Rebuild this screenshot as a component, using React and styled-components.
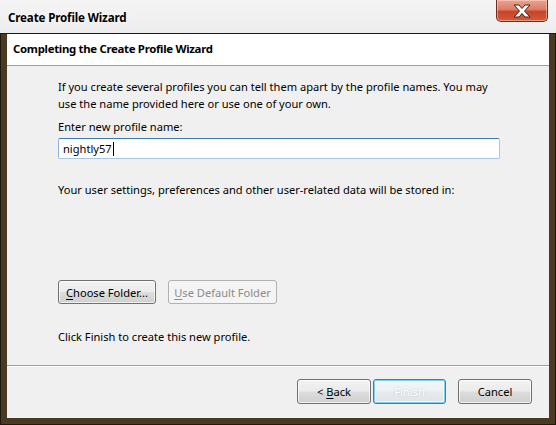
import styled, { createGlobalStyle } from "styled-components";

// Create Profile Wizard dialog (Windows 7 look)
const GlobalStyle = createGlobalStyle`
  html, body {
    margin: 0;
    padding: 0;
    background: #f0f0f0;
  }
  body {
    font-family: "Segoe UI", "Noto Sans", "Open Sans", sans-serif;
    font-size: 11.1px;
    color: #000;
  }
`;

const Window = styled.div`
  width: 556px;
  height: 425px;
  display: flex;
  flex-direction: column;
  background: #f0f0f0;
  overflow: hidden;
`;

const TitleBar = styled.div`
  height: 33px;
  flex-shrink: 0;
  display: flex;
  justify-content: space-between;
  align-items: flex-start;
  padding: 0 8px 0 8px;
  background: linear-gradient(#f4f4f4, #ededed);
`;

const TitleText = styled.div`
  font-weight: bold;
  font-size: 11.6px;
  letter-spacing: -0.15px;
  line-height: 35px;
  text-shadow: 0 0 6px #fff;
`;

const CloseButton = styled.div`
  width: 52px;
  height: 22px;
  box-sizing: border-box;
  display: flex;
  align-items: center;
  justify-content: center;
  border: 1px solid #6e2b20;
  border-top: none;
  border-radius: 0 0 5px 5px;
  background: linear-gradient(#e9a593 0%, #dd7b62 45%, #c8432a 55%, #d35a3a 100%);
  box-shadow: inset 0 0 0 1px rgba(255, 220, 210, 0.5);
`;

const Frame = styled.div`
  flex: 1;
  display: flex;
  flex-direction: column;
  border: 7px solid #4a3a22;
  border-top: none;
  box-shadow: inset 1px 0 0 #d6d0c4, inset -1px 0 0 #d6d0c4, inset 0 -1px 0 #d6d0c4;
  outline: 1px solid #1d1810;
  outline-offset: -1px;
`;

const Inner = styled.div`
  flex: 1;
  display: flex;
  flex-direction: column;
  background: #f0f0f0;
`;

const Header = styled.div`
  height: 33px;
  box-sizing: border-box;
  flex-shrink: 0;
  background: #fff;
  border-bottom: 1px solid #a0a0a0;
  padding-left: 6px;
  font-weight: bold;
  font-size: 11.4px;
  letter-spacing: -0.3px;
  line-height: 31px;
`;

const Body = styled.div`
  flex: 1;
  display: flex;
  flex-direction: column;
  padding: 12px 0 0 51px;
  line-height: 17px;
`;

const Paragraph = styled.p`
  margin: 0 0 ${(p) => p.$gap || 0}px 0;
  width: 445px;
`;

const NameInput = styled.div`
  width: 442px;
  height: 21px;
  box-sizing: border-box;
  background: #fff;
  border: 1px solid #a9c6e4;
  border-top-color: #3d7bad;
  border-left-color: #8fb4d8;
  border-radius: 2px;
  padding-left: 4px;
  display: flex;
  align-items: center;
  margin-bottom: 22px;
`;

const Caret = styled.span`
  display: inline-block;
  width: 1px;
  height: 14px;
  background: #000;
  margin-left: 1px;
`;

const ButtonRow = styled.div`
  display: flex;
  gap: 12px;
  margin-top: 82px;
  margin-bottom: 24px;
`;

const Button = styled.div`
  width: ${(p) => p.$w}px;
  height: ${(p) => p.$h || 24}px;
  box-sizing: border-box;
  display: flex;
  align-items: center;
  justify-content: center;
  border-radius: 3px;
  border: 1px solid #707070;
  background: linear-gradient(#f2f2f2 0%, #ebebeb 48%, #dddddd 52%, #cfcfcf 100%);
  box-shadow: inset 0 0 0 1px rgba(255, 255, 255, 0.7);
  color: #000;

  ${(p) =>
    p.$disabled &&
    `
    border-color: #adb2b5;
    background: #f4f4f4;
    box-shadow: none;
    color: #8b8b8b;
  `}

  ${(p) =>
    p.$default &&
    `
    border-color: #3c7fb1;
    background: linear-gradient(#f4f6f8 0%, #eef1f3 48%, #e6eaec 52%, #e0e4e6 100%);
    box-shadow: inset 0 0 0 1px #7dcfef, inset 0 0 0 2px rgba(255,255,255,0.6);
    color: #fff;
    text-shadow: 0 0 2px #b8c2ca;
  `}
`;

const Key = styled.span`
  text-decoration: underline;
  text-underline-offset: 2px;
`;

const Separator = styled.div`
  height: 1px;
  background: #a0a0a0;
  border-bottom: 1px solid #fff;
`;

const Footer = styled.div`
  display: flex;
  justify-content: flex-end;
  align-items: flex-start;
  padding: 12px 17px 14px 0;
  height: 25px;
`;

const FooterGroup = styled.div`
  display: flex;
  gap: ${(p) => p.$gap}px;
  margin-left: ${(p) => p.$ml || 0}px;
`;

const CloseIcon = () => (
  <svg width="20" height="14" viewBox="0 0 20 14">
    <path
      d="M2 1 H7 L10 4.5 L13 1 H18 L12.5 7 L18 13 H13 L10 9.5 L7 13 H2 L7.5 7 Z"
      fill="#fff"
      stroke="#4a1e16"
      strokeWidth="1"
      strokeLinejoin="round"
    />
  </svg>
);

const App = () => {
  return (
    <Window>
      <GlobalStyle />
      <TitleBar>
        <TitleText>Create Profile Wizard</TitleText>
        <CloseButton>
          <CloseIcon />
        </CloseButton>
      </TitleBar>
      <Frame>
        <Inner>
          <Header>Completing the Create Profile Wizard</Header>
          <Body>
            <Paragraph $gap={6}>
              If you create several profiles you can tell them apart by the profile names. You may
              use the name provided here or use one of your own.
            </Paragraph>
            <Paragraph $gap={3}>Enter new profile name:</Paragraph>
            <NameInput>
              nightly57
              <Caret />
            </NameInput>
            <Paragraph>
              Your user settings, preferences and other user-related data will be stored in:
            </Paragraph>
            <ButtonRow>
              <Button $w={98}>
                <span>
                  <Key>C</Key>hoose Folder...
                </span>
              </Button>
              <Button $w={109} $disabled>
                <span>
                  <Key>U</Key>se Default Folder
                </span>
              </Button>
            </ButtonRow>
            <Paragraph>Click Finish to create this new profile.</Paragraph>
          </Body>
          <Separator />
          <Footer>
            <FooterGroup $gap={2}>
              <Button $w={74} $h={25}>
                <span>
                  &lt; <Key>B</Key>ack
                </span>
              </Button>
              <Button $w={73} $h={25} $default>
                Finish
              </Button>
            </FooterGroup>
            <FooterGroup $gap={0} $ml={12}>
              <Button $w={74} $h={25}>
                Cancel
              </Button>
            </FooterGroup>
          </Footer>
        </Inner>
      </Frame>
    </Window>
  );
};

export default App;
